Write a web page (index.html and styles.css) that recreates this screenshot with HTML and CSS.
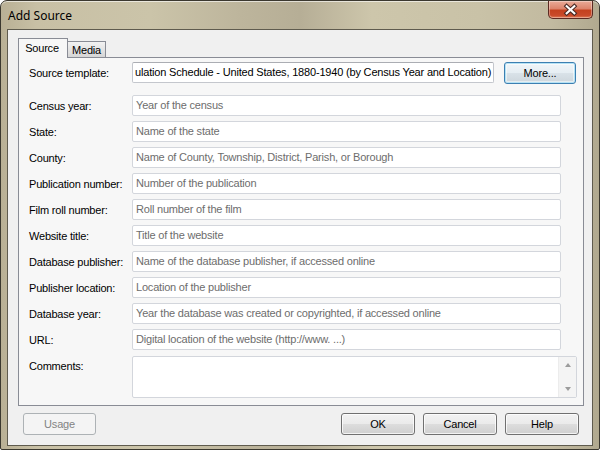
FILE: index.html
```html
<!DOCTYPE html>
<html>
<head>
<meta charset="utf-8">
<link rel="stylesheet" href="styles.css">
</head>
<body>
<div class="window">
  <div class="titlebar">
    <span class="title">Add Source</span>
    <div class="close">
      <svg width="45" height="18" viewBox="0 0 45 18">
        <path d="M18.5 5 L26.5 12.5 M26.5 5 L18.5 12.5" stroke="#4a2a24" stroke-width="4.4" stroke-linecap="square"/>
        <path d="M18.5 5 L26.5 12.5 M26.5 5 L18.5 12.5" stroke="#ffffff" stroke-width="2.2" stroke-linecap="square"/>
      </svg>
    </div>
  </div>
  <div class="client">
    <div class="tabs">
      <div class="tab active">Source</div>
      <div class="tab">Media</div>
    </div>
    <div class="panel">
      <div class="row first">
        <label class="lbl">Source template:</label>
        <div class="field template">ulation Schedule - United States, 1880-1940 (by Census Year and Location)</div>
        <button class="btn more">More...</button>
      </div>
      <div class="row"><label class="lbl">Census year:</label><div class="field ph">Year of the census</div></div>
      <div class="row"><label class="lbl">State:</label><div class="field ph">Name of the state</div></div>
      <div class="row"><label class="lbl">County:</label><div class="field ph">Name of County, Township, District, Parish, or Borough</div></div>
      <div class="row"><label class="lbl">Publication number:</label><div class="field ph">Number of the publication</div></div>
      <div class="row"><label class="lbl">Film roll number:</label><div class="field ph">Roll number of the film</div></div>
      <div class="row"><label class="lbl">Website title:</label><div class="field ph">Title of the website</div></div>
      <div class="row"><label class="lbl">Database publisher:</label><div class="field ph">Name of the database publisher, if accessed online</div></div>
      <div class="row"><label class="lbl">Publisher location:</label><div class="field ph">Location of the publisher</div></div>
      <div class="row"><label class="lbl">Database year:</label><div class="field ph">Year the database was created or copyrighted, if accessed online</div></div>
      <div class="row"><label class="lbl">URL:</label><div class="field ph">Digital location of the website (http://www. ...)</div></div>
      <div class="row comments">
        <label class="lbl">Comments:</label>
        <div class="memo">
          <div class="memo-area"></div>
          <div class="vscroll">
            <span class="arr up"></span>
            <span class="arr down"></span>
          </div>
        </div>
      </div>
    </div>
    <div class="buttons">
      <button class="btn disabled">Usage</button>
      <div class="right-btns">
        <button class="btn">OK</button>
        <button class="btn">Cancel</button>
        <button class="btn">Help</button>
      </div>
    </div>
  </div>
</div>
</body>
</html>
```

FILE: styles.css
```css
html, body {
  margin: 0;
  padding: 0;
  width: 600px;
  height: 450px;
  overflow: hidden;
  background: #ffffff;
}

.window {
  box-sizing: border-box;
  width: 600px;
  height: 450px;
  border: 1px solid #3b382f;
  border-radius: 7px 7px 2px 2px;
  background: linear-gradient(90deg, #b9b095 0%, #c8c0a5 6%, #cbc4a9 25%, #bdb59c 40%, #b6ae96 50%, #cdc6ab 62%, #c9c2a7 80%, #c2baa0 92%, #b1a98f 100%);
  display: flex;
  flex-direction: column;
  font-family: "Liberation Sans", Arial, sans-serif;
  font-size: 11px;
  letter-spacing: -0.2px;
  color: #000;
  box-shadow: inset 0 1px 0 rgba(255,255,255,0.6);
}

.titlebar {
  height: 28px;
  display: flex;
  align-items: flex-start;
  padding-left: 7px;
  flex: none;
}

.title {
  font-family: "Noto Sans", "Liberation Sans", sans-serif;
  font-size: 12px;
  letter-spacing: 0;
  line-height: 30px;
  color: #000;
}

.close {
  margin-left: auto;
  margin-right: 6px;
  width: 45px;
  height: 18px;
  box-sizing: border-box;
  border: 1px solid #5b2a22;
  border-top: none;
  border-radius: 0 0 5px 5px;
  background: linear-gradient(180deg, #e9ab98 0%, #dc846c 45%, #c4411f 55%, #c94a2a 85%, #df7e58 100%);
  box-shadow: inset 0 0 0 1px rgba(255,255,255,0.35);
  display: flex;
  align-items: center;
  justify-content: center;
}

.close svg {
  display: block;
}

.client {
  flex: none;
  height: 417px;
  box-sizing: border-box;
  margin: 0 6px;
  border: 1px solid #5f5b4e;
  background: #f0f0f0;
  padding: 8px 0 0 10px;
  display: flex;
  flex-direction: column;
}

.tabs {
  display: flex;
  align-items: flex-end;
  height: 19px;
  position: relative;
  z-index: 2;
}

.tab {
  box-sizing: border-box;
  height: 16px;
  width: 38px;
  border: 1px solid #898c95;
  border-bottom: none;
  border-left: none;
  background: linear-gradient(180deg, #f2f2f2 0%, #e4e4e4 50%, #d6d6d6 100%);
  text-align: center;
  line-height: 16px;
  font-size: 11px;
}

.tab.active {
  width: 50px;
  height: 20px;
  margin-bottom: -1px;
  border-left: 1px solid #898c95;
  background: #f7f7f7;
  line-height: 18px;
  padding-right: 2px;
}

.panel {
  box-sizing: border-box;
  width: 566px;
  height: 349px;
  border: 1px solid #898c95;
  background: #f7f7f7;
  padding: 4px 0 0 10px;
  display: flex;
  flex-direction: column;
  gap: 5px;
}

.row {
  display: flex;
  align-items: center;
  height: 21px;
}

.row.first {
  margin-bottom: 7px;
}

.lbl {
  width: 103px;
  flex: none;
  white-space: nowrap;
}

.field {
  box-sizing: border-box;
  width: 429px;
  height: 21px;
  border: 1px solid #d3d6dc;
  border-radius: 2px;
  background: #fff;
  padding: 0 3px;
  line-height: 19px;
  white-space: nowrap;
  overflow: hidden;
}

.field.ph {
  color: #6d6d6d;
}

.field.template {
  width: 362px;
  border-color: #c4c7cd;
  border-top-color: #abadb3;
  padding: 0 1px 0 2px;
  letter-spacing: -0.18px;
}

.btn {
  box-sizing: border-box;
  width: 74px;
  height: 22px;
  border: 1px solid #707070;
  border-radius: 3px;
  background: linear-gradient(180deg, #f2f2f2 0%, #ebebeb 48%, #dddddd 52%, #cfcfcf 100%);
  box-shadow: inset 0 0 0 1px rgba(255,255,255,0.75);
  font-family: "Liberation Sans", Arial, sans-serif;
  font-size: 11px;
  letter-spacing: -0.2px;
  color: #000;
  padding: 0;
  margin: 0;
}

.btn.more {
  width: 72px;
  margin-left: 10px;
  border-color: #3c7fb1;
  box-shadow: inset 0 0 0 1px #b5e2f5, inset 0 0 0 2px rgba(255,255,255,0.5);
  background: linear-gradient(180deg, #f0f5f8 0%, #e6eef3 48%, #d9e2e8 52%, #cdd6dc 100%);
}

.btn.disabled {
  width: 73px;
  border-color: #adb2b5;
  background: #f4f4f4;
  box-shadow: none;
  color: #838383;
}

.row.comments {
  height: 42px;
  align-items: flex-start;
  margin-top: 1px;
}

.row.comments .lbl {
  padding-top: 4px;
}

.memo {
  box-sizing: border-box;
  width: 445px;
  height: 42px;
  border: 1px solid #d3d6dc;
  border-radius: 2px;
  background: #fff;
  display: flex;
}

.memo-area {
  flex: 1;
}

.vscroll {
  width: 17px;
  background: #f4f4f4;
  border-left: 1px solid #ececec;
  display: flex;
  flex-direction: column;
  justify-content: space-between;
  align-items: center;
  padding: 6px 0 6px;
}

.arr {
  width: 0;
  height: 0;
  border-left: 3.5px solid transparent;
  border-right: 3.5px solid transparent;
}

.arr.up {
  border-bottom: 4px solid #9c9c9c;
}

.arr.down {
  border-top: 4px solid #9c9c9c;
}

.buttons {
  display: flex;
  align-items: center;
  margin-top: 7px;
  padding-left: 5px;
  width: 556px;
}

.right-btns {
  margin-left: auto;
  display: flex;
  gap: 8px;
}
```
